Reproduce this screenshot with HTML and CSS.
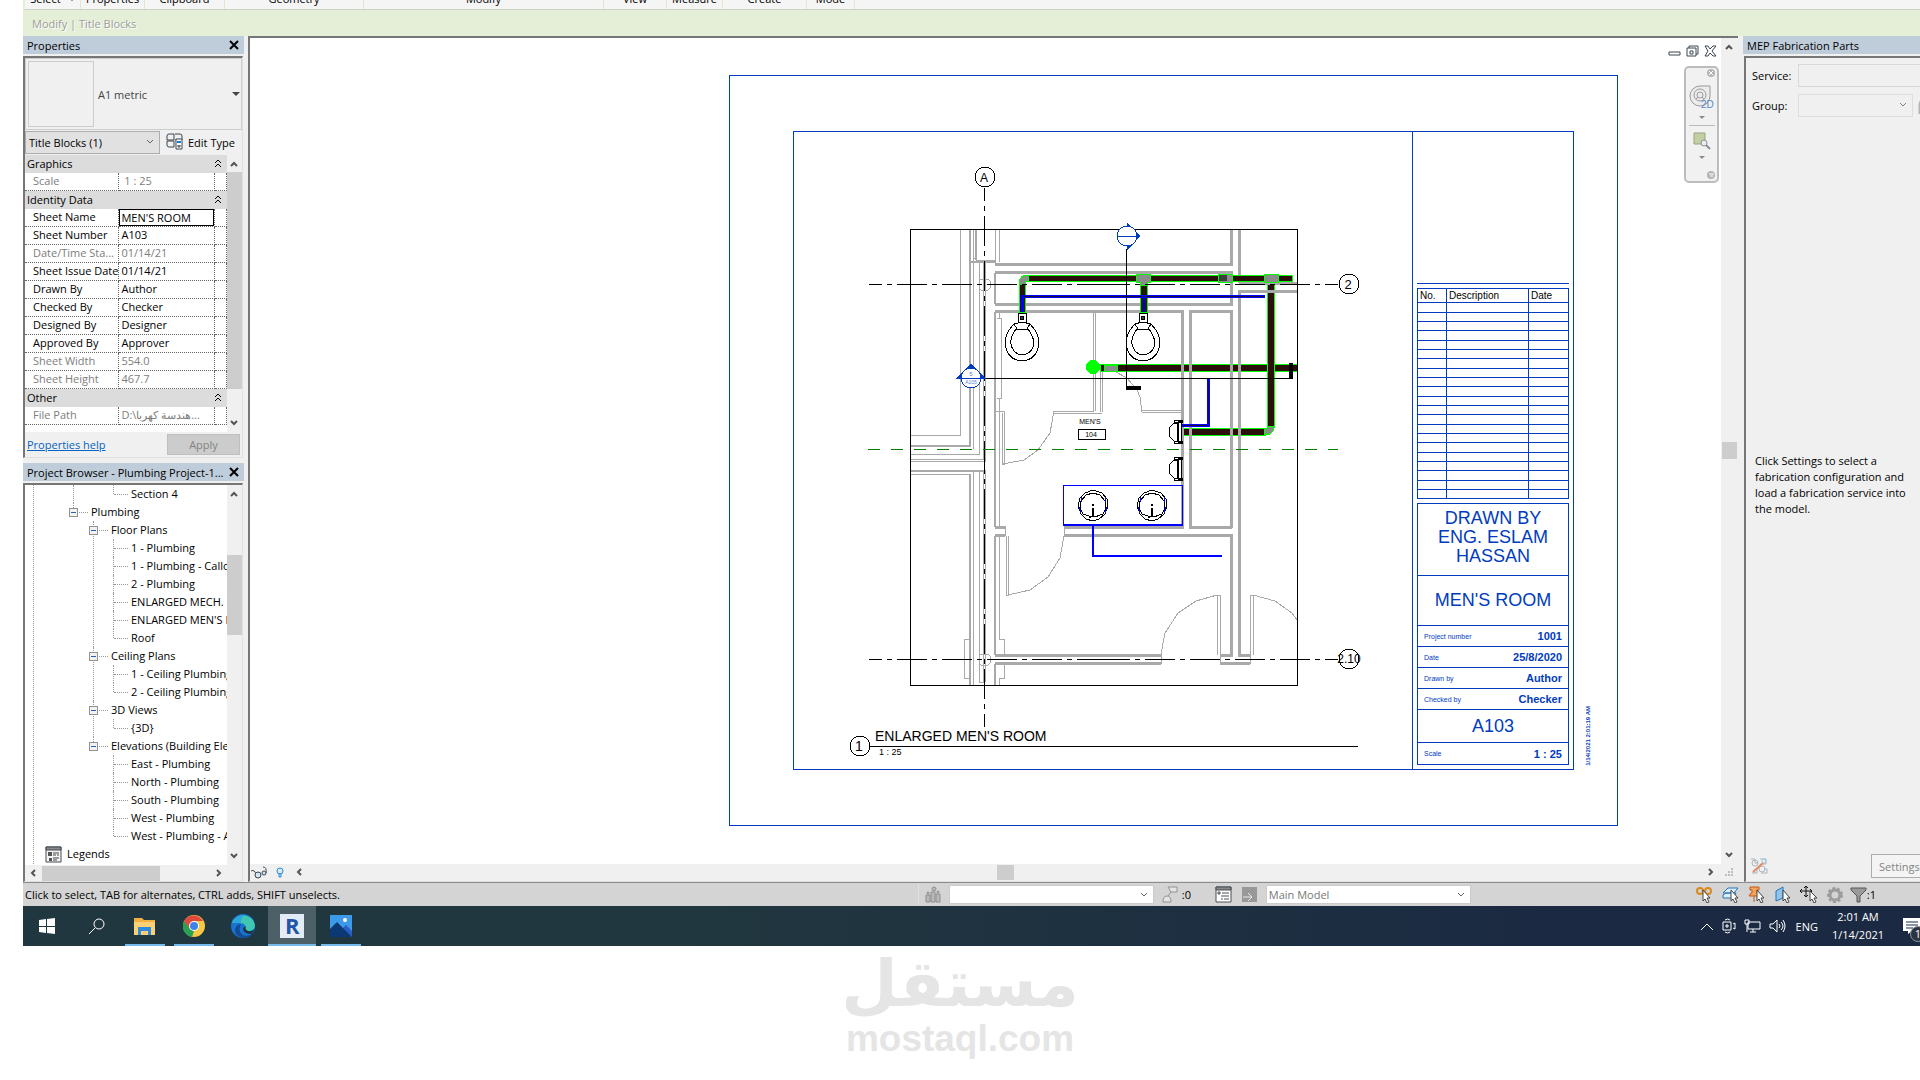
FILE: index.html
```html
<!DOCTYPE html>
<html lang="en">
<head>
  <meta charset="UTF-8">
  <meta name="viewport" content="width=device-width, initial-scale=1.0">
  <title>Plumbing Project - Sheet A103</title>
  <link rel="stylesheet" href="styles.css">
</head>
<body>
  <div class="app">
    <div class="ribbon">
      <span class="ribbon-panel select-panel">Select <i class="caret"></i></span>
      <span class="ribbon-panel properties-panel">Properties</span>
      <span class="ribbon-panel clipboard-panel">Clipboard</span>
      <span class="ribbon-panel geometry-panel">Geometry</span>
      <span class="ribbon-panel modify-panel">Modify</span>
      <span class="ribbon-panel view-panel">View</span>
      <span class="ribbon-panel measure-panel">Measure</span>
      <span class="ribbon-panel create-panel">Create</span>
      <span class="ribbon-panel mode-panel">Mode</span>
    </div>
    <div class="options-bar">Modify | Title Blocks</div>

    <div class="workspace">
      <div class="left-dock">
        <section class="palette">
          <header class="palette-title">
            <h2>Properties</h2>
            <button class="close" aria-label="Close properties"><svg width="10" height="10"><path d="M1 1l8 8M9 1l-8 8"/></svg></button>
          </header>
          <div class="palette-body">
            <div class="type-selector">
              <div class="type-preview"></div>
              <span>A1 metric</span>
              <i class="caret"></i>
            </div>
            <div class="filter-row">
              <select class="filter-select" aria-label="Category filter"><option>Title Blocks (1)</option></select>
              <button class="edit-type">
                <svg width="18" height="18" fill="none" stroke="#3c4650"><path d="M1 3q0-2 2-2h5v6H1zM9 1h5q2 0 2 2v4H9M1 8h7v6H3q-2 0-2-2z"/><path d="M10 6h6v10h-6z" fill="#fff"/><path d="M11 8h4v2h-4z" fill="#1979ca" stroke="none"/><path d="M11 13h4M13 12v3"/></svg>
                Edit Type
              </button>
            </div>
            <div class="property-list">
              <table class="properties">
                <tr class="group"><th colspan="3">Graphics <svg class="chevrons" width="8" height="10"><path d="M1 4l3-3 3 3M1 8l3-3 3 3"/></svg></th></tr>
                <tr class="locked"><th>Scale</th><td>&nbsp;1 : 25</td><td></td></tr>
                <tr class="group"><th colspan="3">Identity Data <svg class="chevrons" width="8" height="10"><path d="M1 4l3-3 3 3M1 8l3-3 3 3"/></svg></th></tr>
                <tr><th><label for="sheet-name">Sheet Name</label></th><td class="editing"><input id="sheet-name" type="text" value="MEN'S ROOM"></td><td></td></tr>
                <tr><th>Sheet Number</th><td>A103</td><td></td></tr>
                <tr class="locked"><th>Date/Time Sta...</th><td>01/14/21</td><td></td></tr>
                <tr><th>Sheet Issue Date</th><td>01/14/21</td><td></td></tr>
                <tr><th>Drawn By</th><td>Author</td><td></td></tr>
                <tr><th>Checked By</th><td>Checker</td><td></td></tr>
                <tr><th>Designed By</th><td>Designer</td><td></td></tr>
                <tr><th>Approved By</th><td>Approver</td><td></td></tr>
                <tr class="locked"><th>Sheet Width</th><td>554.0</td><td></td></tr>
                <tr class="locked"><th>Sheet Height</th><td>467.7</td><td></td></tr>
                <tr class="group"><th colspan="3">Other <svg class="chevrons" width="8" height="10"><path d="M1 4l3-3 3 3M1 8l3-3 3 3"/></svg></th></tr>
                <tr class="locked"><th>File Path</th><td>D:\<bdi>هندسة كهربا</bdi>...</td><td></td></tr>
              </table>
              <div class="scroll-y">
                <svg width="9" height="6"><path d="M1 5l3-3 3 3"/></svg>
                <div class="thumb properties-thumb"></div>
                <svg width="9" height="6"><path d="M1 1l3 3 3-3"/></svg>
              </div>
            </div>
            <div class="palette-footer">
              <a href="#">Properties help</a>
              <button class="apply" disabled>Apply</button>
            </div>
          </div>
        </section>

        <section class="palette browser">
          <header class="palette-title">
            <h2>Project Browser - Plumbing Project-1...</h2>
            <button class="close" aria-label="Close project browser"><svg width="10" height="10"><path d="M1 1l8 8M9 1l-8 8"/></svg></button>
          </header>
          <div class="palette-body">
            <div class="tree-area">
              <div class="tree">
                <ul class="disciplines">
                  <li>
                    <ul class="outdent"><li>Section 4</li></ul>
                  </li>
                  <li><button class="toggle" aria-label="Collapse"></button>Plumbing
                    <ul>
                      <li><button class="toggle" aria-label="Collapse"></button>Floor Plans
                        <ul>
                          <li>1 - Plumbing</li>
                          <li>1 - Plumbing - Callout</li>
                          <li>2 - Plumbing</li>
                          <li>ENLARGED MECH. ROOM</li>
                          <li>ENLARGED MEN'S ROOM</li>
                          <li>Roof</li>
                        </ul>
                      </li>
                      <li><button class="toggle" aria-label="Collapse"></button>Ceiling Plans
                        <ul>
                          <li>1 - Ceiling Plumbing</li>
                          <li>2 - Ceiling Plumbing</li>
                        </ul>
                      </li>
                      <li><button class="toggle" aria-label="Collapse"></button>3D Views
                        <ul>
                          <li>{3D}</li>
                        </ul>
                      </li>
                      <li><button class="toggle" aria-label="Collapse"></button>Elevations (Building Elevation)
                        <ul>
                          <li>East - Plumbing</li>
                          <li>North - Plumbing</li>
                          <li>South - Plumbing</li>
                          <li>West - Plumbing</li>
                          <li>West - Plumbing - A</li>
                        </ul>
                      </li>
                    </ul>
                  </li>
                </ul>
                <div class="legends">
                  <svg width="17" height="17"><path d="M1 1h15v15H1z" fill="#f4f4f4" stroke="#444b52"/><path d="M1 1h15v3H1z" fill="#888" stroke="#444b52"/><path d="M3 6h4v4H3zM4 12h3v3H4z" fill="#555"/><path d="M8 7h6M8 9h3M12 9h2M8 12h6M8 14h4" stroke="#444"/></svg>
                  Legends
                </div>
              </div>
              <div class="scroll-y">
                <svg width="9" height="6"><path d="M1 5l3-3 3 3"/></svg>
                <div class="thumb browser-thumb"></div>
                <svg width="9" height="6"><path d="M1 1l3 3 3-3"/></svg>
              </div>
            </div>
            <div class="scroll-x">
              <svg width="6" height="9"><path d="M5 1l-3 3 3 3"/></svg>
              <div class="thumb browser-thumb-x"></div>
              <svg width="6" height="9"><path d="M1 1l3 3-3 3"/></svg>
            </div>
          </div>
        </section>
      </div>

      <main class="drawing">
        <div class="drawing-row">
          <div class="canvas">
            <div class="sheet">
              <div class="sheet-frame">
                <svg class="plan" viewBox="794 132 618 637" font-family="Liberation Sans, Arial, sans-serif">
                  <defs>
                    <g id="toilet" fill="none" stroke="#000">
                      <path d="M-4 0h8v9h-8z" fill="#fff"/>
                      <circle cx="0" cy="5" r="2" fill="#444"/>
                      <path d="M-8 11Q0 8 8 11Q17 20 17 30Q15 47 0 48Q-15 47-17 30Q-17 20-8 11z" fill="#fff"/>
                      <path d="M-6 16h12Q12 24 12 31Q10 41 0 42Q-9 41-11 31Q-12 24-6 16zM-8 11l3 5M8 11l-3 5"/>
                    </g>
                    <g id="urinal" fill="#fff" stroke="#000">
                      <path d="M8 3H5L0 8v8l5 5h3z"/>
                      <path d="M9 1h3v21H9zM5 0h8v2H5zM5 21h8v2H5z"/>
                    </g>
                    <g id="sink" fill="none" stroke="#000">
                      <path d="M0-15L9-12 14-6 15 1 12 9 6 14 0 16-7 14-12 9-15 1-13-7-8-12z"/>
                      <path d="M0-12L7-10 12-4 13 3 10 9Q0 14-10 9L-13 3-12-4-7-10z"/>
                      <path d="M-12-8v5M-14 2l2 6M12-8v5M14 2l-2 6" stroke="#00f"/>
                      <circle cx="0" cy="0" r="1"/>
                      <path d="M0 3v8" stroke-width="2"/>
                      <path d="M-4 12h2M3 11h2"/>
                    </g>
                  </defs>

                  <!-- waste pipes below the walls -->
                  <g class="pipe">
                    <path d="M1100 364h197v7h-197z"/>
                    <path d="M1182 428h83v7h-83z"/>
                    <path d="M1267 282h7v145h-7z"/>
                  </g>
                  <path class="fitting" d="M1264 428h3v-2h7q0 9-10 9z"/>

                  <!-- thick walls -->
                  <g class="wall">
                    <path d="M995 264h238M995 272h238M995 304h238M995 311h189M1189 311h44"/>
                    <path d="M1231 229v36M1231 272v33M1239 229v54M1239 290v367M1239 291h58M1239 283h58"/>
                    <path d="M1182 311v218M1190 311v217M1231 311v217M1231 534v122"/>
                    <path d="M995 527h10M1064 527h119M1189 527h43M995 535h10M1064 535h168"/>
                    <path d="M995 655h166M995 663h166M1220 655h13M1238 655h12M1220 663h30"/>
                  </g>
                  <g class="wall medium">
                    <path d="M995 273v31M995 312v215M995 536v119M995 664v21"/>
                    <path d="M970 229v218M910 446h61M910 471h74M970 474v211M970 262h25"/>
                  </g>

                  <!-- thin wall edges, frames and doors -->
                  <g class="edge">
                    <path d="M960 229v206h-50M973 229v220M975 229v31M976 229v31M977 260h18M979 262v192h-69M983 262v197h-73M985 262v199h-75"/>
                    <path d="M910 474h60M973 472v213M979 471v211h5M983 470v212M985 470v212M969 639h-5v39h5"/>
                    <path d="M995 229v35M999 229v33M997 318h4v80h-4M999 312v6M999 398v129M999 536v103h5v16M1004 665v13h-5v7"/>
                    <path d="M995 411h9v53h-2v-51M1003 464L1024 460 1038 450 1050 433 1054 411"/>
                    <path d="M1054 411h40M1054 413h48M1093 313v98M1095 313v98M1100 372v40M1102 372v40"/>
                    <path d="M1114 371L1127 378 1137 390 1140 397 1142 412M1142 410h40M1142 412h40"/>
                    <path d="M1005 526v10M1064 526v10M1006 536v59h2v-59M1008 595L1030 590 1048 577 1060 558 1064 536"/>
                    <path d="M1161 654v10M1220 654v10M1250 654v10M1217 655v-60h3v60M1217 595L1196 601 1178 613 1165 633 1161 654"/>
                    <path d="M1250 655v-60h3v60M1253 595L1275 601 1292 613 1297 620"/>
                    <path d="M981 279h7l2 2v7l-2 2h-7l-2-2v-7zM981 654h7l2 2v7l-2 2h-7l-2-2v-7z"/>
                    <circle cx="975" cy="260" r="2"/>
                  </g>

                  <!-- waste pipes above the walls -->
                  <g class="pipe">
                    <path d="M1028 275h264v6h-264z"/>
                    <path d="M1019 284h6v28h-6z"/>
                    <path d="M1140 282h7v30h-7z"/>
                  </g>
                  <path class="fitting" d="M1019 284q0-9 9-9v6q-3 0-3 3z"/>
                  <path class="fitting" d="M1136 274h14v8h-3v3h-7v-3h-4zM1218 274h14v8h-14zM1264 274h14v8h-14zM1104 365h13v6h-13z"/>
                  <path d="M1219 275h8v6h-8z" fill="#3c3c3c"/>
                  <circle cx="1093" cy="367" r="7" fill="#0f0"/>

                  <!-- cold water -->
                  <path class="water" d="M1022 312v-16h243M1182 425h26v-46"/>
                  <path class="water-core" d="M1024 296h240M1184 425h23M1208 423v-42"/>
                  <path d="M1142 296v16M1145 296v16M1063 485h119v40h-119z" fill="none" stroke="#00f"/>
                  <path d="M1063 525h119M1093 525v31h129" fill="none" stroke="#00f" stroke-width="2"/>

                  <use href="#toilet" x="1022" y="313"/>
                  <use href="#toilet" x="1143" y="313"/>
                  <use href="#urinal" x="1169" y="420"/>
                  <use href="#urinal" x="1169" y="457"/>
                  <use href="#sink" x="1093" y="505"/>
                  <use href="#sink" x="1152" y="505"/>

                  <!-- grids and crop region -->
                  <path class="crop" d="M910 229h387v456H910z"/>
                  <path class="grid-line" d="M984 188v269M984 727V457"/>
                  <path class="grid-line" d="M869 284h235M1338 284h-235M869 659h235M1338 659h-235"/>
                  <path d="M868 449h470" stroke="#008000" stroke-dasharray="12 11"/>
                  <g class="bubble">
                    <circle cx="985" cy="177" r="10"/>
                    <circle cx="1349" cy="284" r="10"/>
                    <circle cx="1349" cy="659" r="10"/>
                    <circle cx="860" cy="746" r="10"/>
                  </g>
                  <g text-anchor="middle">
                    <text x="984" y="182" font-size="12">A</text>
                    <text x="1348" y="289" font-size="13">2</text>
                    <text x="1349" y="663" font-size="12">2.10</text>
                    <text x="859" y="751" font-size="14">1</text>
                    <text x="1090" y="424" font-size="7">MEN'S</text>
                    <text x="1091" y="437" font-size="7">104</text>
                  </g>
                  <path class="crop" d="M1078 429h27v10h-27z"/>

                  <!-- section marks -->
                  <path d="M984 378h309M1126 249v139" stroke="#000"/>
                  <path d="M1289 363h4v15h-4zM1126 386h15v4h-15z"/>
                  <g class="section-mark">
                    <path d="M957 378l14-14 14 14z"/>
                    <circle cx="971" cy="378" r="10"/>
                    <path d="M957 378h28"/>
                    <path d="M1127 223l13 13-13 14z"/>
                    <circle cx="1127" cy="236" r="10"/>
                    <path d="M1117 236h22"/>
                  </g>
                  <g class="section-label" text-anchor="middle">
                    <text x="971" y="376" font-size="6">5</text>
                    <text x="971" y="384" font-size="5">A105</text>
                  </g>

                  <path d="M870 746h488" stroke="#000"/>
                  <text x="875" y="741" font-size="14">ENLARGED MEN'S ROOM</text>
                  <text x="879" y="755" font-size="9">1 : 25</text>
                </svg>

                <aside class="title-column">
                  <div class="rule"></div>
                  <table class="revisions">
                    <thead><tr><th class="rev-no">No.</th><th>Description</th><th class="rev-date">Date</th></tr></thead>
                    <tbody>
                      <tr><td></td><td></td><td></td></tr><tr><td></td><td></td><td></td></tr><tr><td></td><td></td><td></td></tr>
                      <tr><td></td><td></td><td></td></tr><tr><td></td><td></td><td></td></tr><tr><td></td><td></td><td></td></tr>
                      <tr><td></td><td></td><td></td></tr><tr><td></td><td></td><td></td></tr><tr><td></td><td></td><td></td></tr>
                      <tr><td></td><td></td><td></td></tr><tr><td></td><td></td><td></td></tr><tr><td></td><td></td><td></td></tr>
                      <tr><td></td><td></td><td></td></tr><tr><td></td><td></td><td></td></tr><tr><td></td><td></td><td></td></tr>
                      <tr><td></td><td></td><td></td></tr><tr><td></td><td></td><td></td></tr><tr><td></td><td></td><td></td></tr>
                      <tr><td></td><td></td><td></td></tr><tr><td></td><td></td><td></td></tr><tr><td></td><td></td><td></td></tr>
                    </tbody>
                  </table>
                  <div class="title-block">
                    <p class="owner">DRAWN BY<br>ENG. ESLAM<br>HASSAN</p>
                    <p class="room">MEN'S ROOM</p>
                    <div class="field"><span>Project number</span><b>1001</b></div>
                    <div class="field"><span>Date</span><b>25/8/2020</b></div>
                    <div class="field"><span>Drawn by</span><b>Author</b></div>
                    <div class="field"><span>Checked by</span><b>Checker</b></div>
                    <p class="number">A103</p>
                    <div class="field"><span>Scale</span><b>1 : 25</b></div>
                  </div>
                </aside>
              </div>
              <span class="timestamp">1/14/2021 2:01:19 AM</span>
            </div>

            <div class="view-buttons">
              <button aria-label="Minimize"><svg width="13" height="12"><path d="M1 7h11v3H1z"/></svg></button>
              <button aria-label="Restore"><svg width="13" height="12"><path d="M3 3V1h9v8h-2M1 3h9v8H1zM4 6h3v3H4z"/></svg></button>
              <button aria-label="Close view"><svg width="13" height="12"><path d="M1 1h3l2 3 3-3h3L8 6l4 5H9L6 8l-2 3H1l3-5z"/></svg></button>
            </div>
            <div class="nav-bar">
              <button class="nav-close" aria-label="Close navigation bar"><svg width="9" height="9"><circle cx="4" cy="4" r="4" fill="#b4b4b4"/><path d="M2 2l4 4M6 2L2 6" stroke="#fff"/></svg></button>
              <button aria-label="Steering wheel 2D">
                <svg width="26" height="26" fill="none" stroke="#9a9a9a"><path d="M11 2h10v10a10 10 0 1 1-10-10z" fill="#ececec"/><circle cx="11" cy="11" r="6"/><circle cx="11" cy="11" r="3"/><path d="M7 15l2-2M15 15l-2-2"/><text x="12" y="24" font-size="10" fill="#5b86c9" stroke="none">2D</text></svg>
              </button>
              <i class="caret"></i>
              <hr>
              <button aria-label="Zoom region">
                <svg width="18" height="18" fill="none" stroke="#8a8f92"><path d="M1 1h11v11H1z" fill="#c3cfa3" stroke="#98a37c"/><circle cx="11" cy="11" r="3" fill="#e8eef2"/><path d="M13 13l4 4" stroke-width="2"/></svg>
              </button>
              <i class="caret"></i>
              <button class="nav-options" aria-label="Navigation options"><svg width="9" height="9"><circle cx="4" cy="4" r="4" fill="#b4b4b4"/><path d="M2 3h5M3 5h3" stroke="#fff"/></svg></button>
            </div>
          </div>
          <div class="scroll-y drawing-scroll">
            <svg width="9" height="6"><path d="M1 5l3-3 3 3"/></svg>
            <div class="thumb drawing-thumb"></div>
            <svg width="9" height="6"><path d="M1 1l3 3 3-3"/></svg>
          </div>
        </div>
        <div class="view-control">
          <svg width="18" height="14" fill="none" stroke="#3a4650"><path d="M1 5q4-2 5 4M13 1q4 0 3 6"/><circle cx="8" cy="9" r="3" fill="#cfe3f5"/><circle cx="14" cy="7" r="2" fill="#cfe3f5"/></svg>
          <svg class="bulb" width="8" height="12" fill="#d7ecfb" stroke="#2f8ad0"><circle cx="4" cy="4" r="3"/><path d="M3 7h2v3H3z"/></svg>
          <div class="scroll-x">
            <svg width="6" height="9"><path d="M5 1l-3 3 3 3"/></svg>
            <div class="thumb drawing-thumb-x"></div>
            <svg width="6" height="9"><path d="M1 1l3 3-3 3"/></svg>
          </div>
          <svg class="grip" width="10" height="10" fill="#bdbdbd"><path d="M7 0h2v2H7zM4 3h2v2H4zM7 3h2v2H7zM1 6h2v2H1zM4 6h2v2H4zM7 6h2v2H7z"/></svg>
        </div>
      </main>

      <section class="palette fabrication">
        <header class="palette-title"><h2>MEP Fabrication Parts</h2></header>
        <div class="palette-body">
          <div class="fab-row"><label for="service">Service:</label><select id="service" class="service" disabled></select></div>
          <div class="fab-row"><label for="group">Group:</label><select id="group" class="group-select" disabled></select><svg width="16" height="18" fill="none" stroke="#b4b4b4" stroke-width="3"><path d="M3 18V9q0-5 6-5"/></svg></div>
          <p>Click Settings to select a<br>fabrication configuration and<br>load a fabrication service into<br>the model.</p>
          <div class="fab-footer">
            <svg width="18" height="18" fill="none" stroke="#a9b4bc"><path d="M1 2h4v4h3M10 2h6v5h-4M2 16h5v-4M11 16h6v-4h-3"/><circle cx="5" cy="6" r="3"/><circle cx="12" cy="12" r="3"/><circle cx="14" cy="4" r="2" stroke="#9fc3e0"/><path d="M3 15L13 6" stroke="#e08a68" stroke-width="2"/></svg>
            <button class="settings">Settings...</button>
          </div>
        </div>
      </section>
    </div>

    <footer class="status-bar">
      <span class="hint">Click to select, TAB for alternates, CTRL adds, SHIFT unselects.</span>
      <div class="worksets">
        <svg width="16" height="17" fill="#b9b9b9" stroke="#8e8e8e"><path d="M1 9h4v7H1zM6 6h4v10H6zM11 8h4v8h-4z"/><circle cx="3" cy="7" r="1"/><circle cx="9" cy="3" r="2"/><circle cx="13" cy="6" r="1"/></svg>
        <select class="status-select" aria-label="Active workset" disabled></select>
        <svg class="editable" width="16" height="17" fill="#e4e4e4" stroke="#929292"><path d="M6 1h9v5H9zM9 6l-3 4M1 16q0-6 4-6t4 6z"/></svg>
        <span class="requests">:0</span>
        <svg class="options-icon" width="17" height="17" fill="#fff" stroke="#4a5056"><path d="M1 1h15v15H1z"/><path d="M1 1h15v3H1z" fill="#888"/><path d="M3 6h2v2H3zM7 7h7M6 10h8M6 13h2M9 13h5"/></svg>
        <svg width="16" height="17" fill="#989898"><path d="M0 1h15v15H0z"/><path d="M1 11h8M6 7l4 4-4 4" fill="none" stroke="#e8e8e8"/></svg>
        <select class="status-select" aria-label="Active design option" disabled><option>Main Model</option></select>
      </div>
      <div class="selection-tools">
        <svg width="17" height="17" fill="none"><circle cx="4" cy="5" r="3" stroke="#d98a1e" stroke-width="2"/><circle cx="12" cy="5" r="3" stroke="#d98a1e" stroke-width="2"/><path class="pointer" d="M7 4v11l2-2 2 4 2-1-2-4h3z"/></svg>
        <svg width="17" height="17" fill="#dceefb" stroke="#2474b5"><path d="M6 2h10l-4 5H1zM1 9l3-2h10l-3 5H1z"/><path class="pointer" d="M9 4v11l2-2 2 4 2-1-2-4h3z"/></svg>
        <svg width="17" height="17" fill="#f5a25a" stroke="#c05a1a"><path d="M2 1h9v3H9v3h2l2 3H1l2-3h1V4H2zM6 10v6"/><path class="pointer" d="M9 4v11l2-2 2 4 2-1-2-4h3z"/></svg>
        <svg width="17" height="17" fill="#8fc4ee" stroke="#2474b5"><path d="M2 5l7-4v11l-7 3z"/><path class="pointer" d="M9 4v11l2-2 2 4 2-1-2-4h3z"/></svg>
        <svg width="18" height="17" fill="none" stroke="#111"><path d="M6 0v11M0 5h12M4 2l2-2 2 2M4 9l2 2 2-2M2 3L0 5l2 2M10 3l2 2-2 2"/><path class="pointer" d="M10 5v10l2-2 2 4 2-1-2-4h3z"/></svg>
        <svg width="16" height="16" fill="none" stroke="#9c9c9c"><circle cx="8" cy="8" r="5" stroke-width="3"/><circle cx="8" cy="8" r="7" stroke-width="2" stroke-dasharray="3 2"/></svg>
        <span class="filter-count"><svg width="17" height="16" fill="#9a9a9a" stroke="#555"><path d="M1 1h15v2l-6 6v6H7V9L1 3z"/></svg>:1</span>
      </div>
    </footer>

    <nav class="taskbar">
      <button aria-label="Start"><svg width="16" height="16" fill="#fff"><path d="M0 2l7-1v7H0zM8 1l8-1v8H8zM0 9h7v6l-7-1zM8 9h8v7l-8-1z"/></svg></button>
      <button aria-label="Search"><svg width="17" height="17" fill="none" stroke="#fff"><circle cx="11" cy="6" r="5"/><path d="M7 10l-6 6"/></svg></button>
      <button class="running" aria-label="File Explorer"><svg width="22" height="19"><path d="M0 1h8l2 2h11v15H0z" fill="#f3b143"/><path d="M0 5h21v13H0z" fill="#fdd075"/><path d="M4 18v-8h13v8h-3v-4H7v4z" fill="#2d8bdd"/></svg></button>
      <button class="running" aria-label="Chrome"><svg width="22" height="22"><circle cx="11" cy="11" r="11" fill="#f7c844"/><path d="M1 6a11 11 0 0 1 19 0h-9l-5 8z" fill="#e0493d"/><path d="M1 6l6 8 4 2-2 6A11 11 0 0 1 1 6z" fill="#29a154"/><circle cx="11" cy="11" r="5" fill="#fff"/><circle cx="11" cy="11" r="4" fill="#3c82e8"/></svg></button>
      <button aria-label="Edge"><svg width="24" height="24"><circle cx="12" cy="12" r="12" fill="#1774d0"/><path d="M1 9A12 12 0 0 1 24 11q0 6-7 6-4-1-2-4-2-6-14-4z" fill="#3fc7b4"/><path d="M1 9A12 12 0 0 1 14 1q-5 2-4 9-4-3-9-1z" fill="#2aa5e0"/><path d="M10 10q-4 7 2 11 5 2 10-2-4 5-10 5-9-2-8-9 2-5 6-5z" fill="#124c94"/><path d="M15 12q-2 3 2 5 4 1 6-2l-2 5q-9 0-9-6z" fill="#20323e"/></svg></button>
      <button class="active" aria-label="Revit"><svg width="24" height="24"><path d="M0 0h24v24H0z" fill="#e3ebf5"/><text x="5" y="20" font-size="22" font-weight="bold" fill="#2255a8">R</text></svg></button>
      <button class="running" aria-label="Photos"><svg width="22" height="22"><path d="M0 0h22v22H0z" fill="#3d9ae8"/><path d="M10 22V16l6-6 6 6v6z" fill="#2c5fc4"/><path d="M0 14l7-7 15 15H0z" fill="#0c3874"/><circle cx="15" cy="5" r="2" fill="#fff"/></svg></button>
      <div class="tray">
        <svg width="14" height="9" fill="none" stroke="#fff"><path d="M1 8l6-6 6 6"/></svg>
        <svg width="14" height="16" fill="none" stroke="#fff"><path d="M1 4h8v8H1zM11 6l2-1v6l-2-1M3 2q3-2 5 0M3 14q3 2 5 0"/><path d="M4 7h2v2H4z"/></svg>
        <svg width="17" height="14" fill="none" stroke="#fff"><path d="M4 3h12v7H4zM6 13h6M9 10v3M1 1h4v4H1zM3 5v8"/></svg>
        <svg width="17" height="14" fill="none" stroke="#fff"><path d="M1 5h3l4-4v12L4 9H1zM10 5q2 2 0 4M12 3q4 4 0 8M14 1q4 6 0 12"/></svg>
        <span class="language">ENG</span>
        <span class="clock">2:01 AM<br>1/14/2021</span>
        <div class="notifications">
          <svg width="18" height="16"><path d="M0 0h18v13h-9l-4 3v-3H0z" fill="#fff"/><path d="M3 4h12M3 7h12M3 10h7" stroke="#1b2a42"/></svg>
          <span class="badge">1</span>
        </div>
      </div>
    </nav>
  </div>

  <div class="watermark">
    <div class="brand-arabic" lang="ar" dir="rtl">مستقل</div>
    <div class="brand-latin">mostaql.com</div>
  </div>
</body>
</html>
```
FILE: styles.css
```css
* {
  margin: 0;
  padding: 0;
  box-sizing: border-box;
}

body {
  min-height: 100vh;
  display: flex;
  flex-direction: column;
  overflow: hidden;
  background: #ffffff;
  color: #000000;
  font-family: 'Open Sans', 'Noto Sans', sans-serif;
  font-size: 11px;
}

button,
input,
select {
  font: inherit;
  color: inherit;
  background: none;
  border: 0;
  border-radius: 0;
}

svg {
  display: block;
  flex-shrink: 0;
}

.app {
  flex: 1;
  display: flex;
  flex-direction: column;
  margin-left: 23px;
  overflow: hidden;
  background: #f0f0f0;
}

.caret {
  border: 4px solid transparent;
  border-top-color: #444444;
  border-bottom: 0;
}

/* Ribbon */
.ribbon {
  display: flex;
  align-items: flex-end;
  height: 10px;
  overflow: hidden;
  background: #f5f5f5;
  border-bottom: 1px solid #cdd3c6;
  border-left: 2px solid #e5efd8;
}

.ribbon-panel {
  display: flex;
  align-items: center;
  justify-content: center;
  gap: 8px;
  height: 20px;
  flex-shrink: 0;
  line-height: 20px;
  border-right: 1px solid #dfe8d3;
}

.select-panel { width: 56px; }
.properties-panel { width: 64px; }
.clipboard-panel { width: 80px; }
.geometry-panel { width: 139px; }
.modify-panel { width: 240px; }
.view-panel { width: 63px; }
.measure-panel { width: 56px; }
.create-panel { width: 84px; }
.mode-panel { width: 48px; }

.select-panel .caret {
  border-width: 3px;
  border-bottom: 0;
}

.options-bar {
  height: 26px;
  padding-left: 9px;
  line-height: 28px;
  background: #e5efd8;
  color: #9c9c9c;
  text-shadow: 1px 1px 0 #ffffff;
}

/* Docked palettes */
.workspace {
  flex: 1;
  display: flex;
  min-height: 0;
}

.left-dock {
  width: 221px;
  display: flex;
  flex-direction: column;
  gap: 5px;
  margin-right: 4px;
}

.palette {
  display: flex;
  flex-direction: column;
  gap: 2px;
}

.palette-title {
  display: flex;
  align-items: center;
  justify-content: space-between;
  height: 18px;
  padding: 0 5px 0 4px;
  background: #bfcddb;
}

.palette-title h2 {
  font-size: 11px;
  font-weight: 400;
  white-space: nowrap;
}

.close {
  width: 10px;
  height: 10px;
}

.close svg {
  stroke: #000000;
  stroke-width: 2;
}

.palette-body {
  flex: 1;
  display: flex;
  flex-direction: column;
  margin-right: 1px;
  border: 2px solid #767676;
  border-right: 1px solid #e0e0e0;
  border-bottom: 1px solid #e0e0e0;
}

.type-selector {
  display: flex;
  align-items: center;
  gap: 4px;
  height: 72px;
  padding: 2px 1px 2px 2px;
  border: 1px solid #cccccc;
  color: #444444;
}

.type-preview {
  width: 66px;
  height: 66px;
  border: 1px solid #cccccc;
}

.type-selector .caret {
  margin-left: auto;
}

.filter-row {
  display: flex;
  align-items: center;
  gap: 6px;
  height: 25px;
  padding-bottom: 1px;
}

.filter-select,
.group-select,
.status-select {
  appearance: none;
  background: #e1e1e1 url("data:image/svg+xml,%3Csvg xmlns='http://www.w3.org/2000/svg' width='9' height='6' fill='none' stroke='%23666'%3E%3Cpath d='M1 1l3 3 3-3'/%3E%3C/svg%3E") no-repeat right 4px center;
}

.filter-select {
  width: 135px;
  height: 23px;
  padding-left: 3px;
  border: 1px solid #adadad;
}

.edit-type {
  display: flex;
  align-items: center;
  gap: 4px;
  white-space: nowrap;
}

.property-list {
  display: flex;
  background: #ffffff;
}

.properties {
  flex: 1;
  margin-bottom: 7px;
  border-collapse: separate;
  border-spacing: 0;
  table-layout: fixed;
}

.properties th,
.properties td {
  height: 18px;
  overflow: hidden;
  border-right: 1px dotted #666666;
  border-bottom: 1px dotted #666666;
  line-height: 15px;
  font-weight: 400;
  text-align: left;
  vertical-align: top;
  white-space: nowrap;
}

.properties th {
  width: 94px;
  padding-left: 8px;
}

.properties td {
  padding-left: 2px;
}

.properties td:last-child {
  width: 12px;
}

.properties .group th {
  width: auto;
  padding-left: 2px;
  background: #dcdcdc;
  border: 0;
  line-height: 17px;
}

.properties .locked {
  color: #7d7d7d;
}

.properties .editing {
  padding: 0;
}

.properties input {
  display: block;
  width: 100%;
  height: 17px;
  padding: 0 0 1px 1px;
  border: 1px solid #000000;
  background: #ffffff;
}

.chevrons {
  float: right;
  margin: 4px 5px 0 0;
  fill: none;
  stroke: #000000;
}

/* Scroll bars */
.scroll-y,
.scroll-x {
  display: flex;
  align-items: center;
  background: #f0f0f0;
}

.scroll-y {
  flex-direction: column;
  width: 15px;
  padding: 6px 0;
}

.scroll-x {
  height: 16px;
  padding: 0 5px;
}

.scroll-y svg,
.scroll-x svg {
  fill: none;
  stroke: #555555;
  stroke-width: 2;
}

.thumb {
  background: #cdcdcd;
}

.scroll-y .thumb {
  width: 15px;
}

.scroll-x .thumb {
  height: 15px;
}

.scroll-y svg:last-child {
  margin-top: auto;
}

.scroll-x svg:last-child {
  margin-left: auto;
}

.properties-thumb {
  margin-top: 5px;
  height: 217px;
}

.browser-thumb {
  margin-top: 58px;
  height: 80px;
}

.browser-thumb-x {
  margin-left: 6px;
  width: 118px;
}

.palette-footer {
  display: flex;
  align-items: center;
  justify-content: space-between;
  height: 25px;
  padding: 0 2px;
}

.palette-footer a {
  color: #0563c1;
}

.apply {
  width: 73px;
  height: 21px;
  background: #cccccc;
  border: 1px solid #bfbfbf;
  color: #838383;
}

/* Project browser tree */
.browser {
  flex: 1;
}

.browser .scroll-x {
  padding-right: 20px;
}

.tree-area {
  flex: 1;
  display: flex;
  background: #ffffff;
}

.tree {
  flex: 1;
  width: 0;
  overflow: hidden;
  line-height: 18px;
  white-space: nowrap;
  background: linear-gradient(#999999 50%, transparent 50%) 8px 0 / 1px 2px repeat-y;
}

.tree ul {
  list-style: none;
  margin-left: 2px;
}

.tree .disciplines {
  margin-left: 48px;
}

.tree .outdent {
  margin-left: 22px;
}

.tree li {
  position: relative;
  padding-left: 18px;
}

.tree li::before {
  content: '';
  position: absolute;
  top: 0;
  bottom: 0;
  left: 0;
  border-left: 1px dotted #999999;
}

.tree li:last-child::before {
  bottom: auto;
  height: 9px;
}

.tree li::after {
  content: '';
  position: absolute;
  top: 9px;
  left: 1px;
  width: 14px;
  border-top: 1px dotted #999999;
}

.disciplines > li:first-child::after {
  display: none;
}

.toggle {
  position: absolute;
  z-index: 1;
  top: 5px;
  left: -4px;
  width: 9px;
  height: 9px;
  background: linear-gradient(#2b5fb4, #2b5fb4) center / 5px 1px no-repeat #f2f2f2;
  border: 1px solid #919191;
}

.legends {
  display: flex;
  align-items: center;
  gap: 5px;
  padding-left: 20px;
}

/* Drawing area */
.drawing {
  flex: 1;
  min-width: 0;
  display: flex;
  flex-direction: column;
  margin-right: 5px;
  border: 2px solid #767676;
  border-right: 0;
  border-bottom: 1px solid #e0e0e0;
}

.drawing-row {
  flex: 1;
  display: flex;
  min-height: 0;
}

.canvas {
  position: relative;
  flex: 1;
  background: #ffffff;
  font-family: 'Liberation Sans', Arial, sans-serif;
}

.sheet {
  display: flex;
  align-items: flex-end;
  width: 889px;
  margin: 37px 103px 0 auto;
  padding: 55px 0 55px 63px;
  border: 1px solid #003cbe;
}

.sheet-frame {
  display: flex;
  border: 1px solid #003cbe;
}

.plan {
  width: 618px;
  height: 637px;
  shape-rendering: crispEdges;
}

.pipe {
  fill: #2c100c;
  stroke: #00ff00;
}

.fitting {
  fill: #8c8c8c;
  stroke: #00ff00;
}

.wall,
.edge {
  fill: none;
  stroke: #a9a9a9;
}

.wall {
  stroke-width: 3;
}

.wall.medium {
  stroke-width: 2;
}

.water {
  fill: none;
  stroke: #0000ff;
  stroke-width: 3;
}

.water-core {
  fill: none;
  stroke: #1c1030;
}

.crop {
  fill: none;
  stroke: #000000;
}

.grid-line {
  fill: none;
  stroke: #000000;
  stroke-dasharray: 30 5 5 5;
  stroke-dashoffset: 17;
}

.bubble {
  fill: none;
  stroke: #000000;
}

.section-mark {
  fill: #003cbe;
  stroke: #003cbe;
}

.section-mark circle {
  fill: #ffffff;
}

.section-label {
  fill: #5b86d8;
}

.title-column {
  width: 161px;
  padding: 151px 4px 4px;
  border-left: 1px solid #003cbe;
  color: #003cbe;
}

/* closes the empty space over the schedule */
.rule {
  margin-bottom: 4px;
  border-top: 1px solid #003cbe;
}

.revisions {
  width: 152px;
  margin-bottom: 4px;
  border-collapse: collapse;
  color: #000000;
  font-size: 10px;
}

.revisions th,
.revisions td {
  border: 1px solid #003cbe;
}

.revisions td {
  height: 9px;
}

.revisions tr:nth-child(3n + 1) td {
  height: 10px;
}

.revisions th {
  height: 14px;
  padding-left: 2px;
  font-weight: 400;
  text-align: left;
  line-height: 13px;
}

.rev-no {
  width: 29px;
}

.rev-date {
  width: 40px;
}

.title-block {
  border: 1px solid #003cbe;
  text-align: center;
  font-size: 18px;
}

.title-block > * {
  border-bottom: 1px solid #003cbe;
}

.title-block > :last-child {
  border-bottom: 0;
}

.owner {
  padding: 5px 0 9px;
  line-height: 19px;
}

.room {
  line-height: 49px;
}

.number {
  line-height: 32px;
}

.field {
  display: flex;
  align-items: center;
  justify-content: space-between;
  height: 21px;
  padding: 0 6px;
}

.field span {
  font-size: 7px;
}

.field b {
  font-size: 11px;
}

.timestamp {
  margin: 0 0 4px 11px;
  writing-mode: vertical-rl;
  transform: rotate(180deg);
  color: #003cbe;
  font-size: 6px;
  font-weight: 700;
  white-space: nowrap;
}

.view-buttons {
  position: absolute;
  top: 7px;
  right: 4px;
  display: flex;
  gap: 5px;
}

.view-buttons svg {
  fill: #ffffff;
  stroke: #3c4650;
}

.nav-bar {
  position: absolute;
  top: 28px;
  right: 2px;
  display: flex;
  flex-direction: column;
  align-items: center;
  gap: 6px;
  width: 35px;
  height: 117px;
  padding: 1px;
  border: 2px solid #bcbcbc;
  border-radius: 5px;
  background: #f1f1f1;
}

.nav-bar .caret {
  border-top-color: #8c8c8c;
  border-width: 3px;
  border-bottom: 0;
}

.nav-bar hr {
  width: 26px;
  border: 0;
  border-top: 1px solid #bcbcbc;
}

.nav-close,
.nav-options {
  align-self: flex-end;
}

.nav-options {
  margin-top: auto;
}

.drawing-scroll {
  width: 17px;
}

.drawing-thumb {
  margin-top: 392px;
  height: 17px;
}

.view-control {
  display: flex;
  align-items: center;
  height: 17px;
  background: #f0f0f0;
}

.bulb {
  margin: 0 6px 0 8px;
}

.view-control .scroll-x {
  flex: 1;
  padding: 0 6px;
}

.drawing-thumb-x {
  margin-left: 695px;
  width: 17px;
}

.grip {
  margin: 0 4px;
}

/* MEP Fabrication Parts */
.fabrication {
  width: 177px;
}

.fabrication .palette-body {
  margin: 0 0 0 1px;
  padding-top: 5px;
  border-right: 0;
}

.fab-row {
  display: flex;
  align-items: center;
  gap: 4px;
  height: 30px;
  padding-left: 6px;
  padding-bottom: 6px;
}

.fab-row label {
  flex-shrink: 0;
  width: 42px;
}

.service,
.group-select {
  flex-shrink: 0;
  width: 115px;
  height: 23px;
  border: 1px solid #d9d9d9;
  background-color: #f0f0f0;
  opacity: 1;
}

.service {
  appearance: none;
  width: 160px;
}

.group-select {
  opacity: 0.8;
}

.fabrication p {
  margin: 330px 0 auto 9px;
  line-height: 16px;
  white-space: nowrap;
}

.fab-footer {
  display: flex;
  align-items: center;
  justify-content: space-between;
  padding: 0 0 3px 4px;
}

.settings {
  flex-shrink: 0;
  width: 80px;
  height: 24px;
  margin-right: -31px;
  padding-left: 7px;
  border: 1px solid #adadad;
  background: #f4f4f4;
  color: #838383;
  text-align: left;
}

/* Status bar */
.status-bar {
  display: flex;
  align-items: center;
  height: 24px;
  padding: 0 44px 0 2px;
  background: #d4d4d4;
  border-top: 1px solid #8c8c8c;
}

.worksets,
.selection-tools {
  display: flex;
  align-items: center;
}

.worksets {
  margin-left: auto;
  padding-left: 6px;
  border-left: 1px dotted #eeeeee;
}

.status-select {
  width: 205px;
  height: 19px;
  margin-left: 8px;
  padding-left: 2px;
  background-color: #ffffff;
  border: 1px solid #cccccc;
  color: #777777;
  opacity: 1;
}

.editable {
  margin: 0 4px 0 8px;
}

.requests {
  width: 33px;
}

.options-icon {
  margin-right: 10px;
}

.selection-tools {
  gap: 9px;
  margin-left: 225px;
}

.pointer {
  fill: #ffffff;
  stroke: #444444;
}

.filter-count {
  display: flex;
  align-items: center;
  margin-left: -2px;
}

/* Taskbar */
.taskbar {
  display: flex;
  gap: 1px;
  height: 40px;
  background: linear-gradient(90deg, #21373f 35%, #1b2a42 80%);
  color: #ffffff;
}

.taskbar button {
  display: flex;
  align-items: center;
  justify-content: center;
  width: 48px;
}

.taskbar .running {
  background: linear-gradient(#76b9ed, #76b9ed) center bottom / 40px 2px no-repeat;
}

.taskbar .active {
  background: linear-gradient(#76b9ed, #76b9ed) center bottom / 48px 2px no-repeat #4d5f67;
}

.tray {
  display: flex;
  align-items: center;
  gap: 8px;
  margin-left: auto;
}

.language {
  margin: 0 3px 0 2px;
}

.clock {
  width: 58px;
  text-align: center;
  line-height: 18px;
}

.notifications {
  position: relative;
  width: 24px;
  margin-left: 8px;
  margin-right: -7px;
}

.badge {
  position: absolute;
  top: 8px;
  left: 7px;
  width: 16px;
  height: 16px;
  border: 1px solid #8a939c;
  border-radius: 50%;
  background: #2a3440;
  line-height: 14px;
  text-align: center;
}

/* Watermark */
.watermark {
  height: 134px;
  padding-top: 4px;
  color: #e5e5e5;
  text-align: center;
  font-weight: 700;
}

.brand-arabic {
  height: 68px;
  font-family: 'DejaVu Sans', sans-serif;
  font-size: 65px;
  line-height: 68px;
}

.brand-latin {
  font-family: 'Liberation Sans', Arial, sans-serif;
  font-size: 37px;
  line-height: 42px;
}
```
